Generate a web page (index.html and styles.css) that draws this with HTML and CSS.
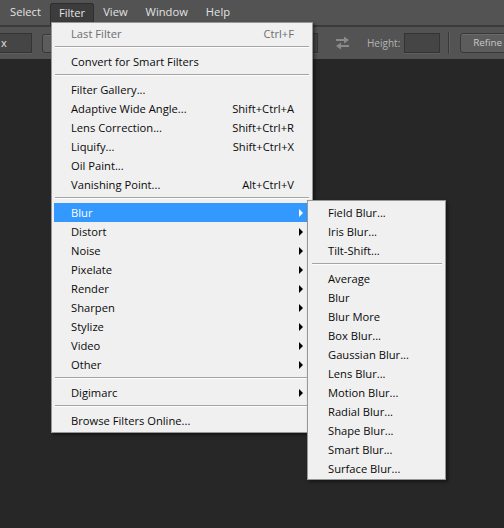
FILE: index.html
```html
<!DOCTYPE html>
<html>
<head>
<meta charset="utf-8">
<link rel="stylesheet" href="styles.css">
</head>
<body>
<div class="app">
  <div class="menubar">
    <span class="mb-item">Select</span>
    <span class="mb-item active">Filter</span>
    <span class="mb-item">View</span>
    <span class="mb-item">Window</span>
    <span class="mb-item">Help</span>
  </div>
  <div class="optbar">
    <div class="field field-unit">x</div>
    <div class="btn btn-small"></div>
    <div class="field field-mid"></div>
    <svg class="swap" width="15" height="14" viewBox="0 0 15 14">
      <polygon points="1,3 9,3 9,0.5 14,4 9,7.5 9,5 1,5" fill="#8a8a8a"/>
      <polygon points="14,9 6,9 6,6.5 1,10 6,13.5 6,11 14,11" fill="#8a8a8a"/>
    </svg>
    <span class="opt-label">Height:</span>
    <div class="field field-h"></div>
    <div class="divider"></div>
    <div class="btn btn-refine">Refine</div>
  </div>
  <div class="workspace"></div>

  <div class="menu">
    <div class="item disabled"><span class="label">Last Filter</span><span class="shortcut">Ctrl+F</span></div>
    <div class="sep"></div>
    <div class="item"><span class="label">Convert for Smart Filters</span></div>
    <div class="sep"></div>
    <div class="item"><span class="label">Filter Gallery...</span></div>
    <div class="item"><span class="label">Adaptive Wide Angle...</span><span class="shortcut">Shift+Ctrl+A</span></div>
    <div class="item"><span class="label">Lens Correction...</span><span class="shortcut">Shift+Ctrl+R</span></div>
    <div class="item"><span class="label">Liquify...</span><span class="shortcut">Shift+Ctrl+X</span></div>
    <div class="item"><span class="label">Oil Paint...</span></div>
    <div class="item"><span class="label">Vanishing Point...</span><span class="shortcut">Alt+Ctrl+V</span></div>
    <div class="sep"></div>
    <div class="item sub selected"><span class="label">Blur</span><span class="arrow"></span></div>
    <div class="item sub"><span class="label">Distort</span><span class="arrow"></span></div>
    <div class="item sub"><span class="label">Noise</span><span class="arrow"></span></div>
    <div class="item sub"><span class="label">Pixelate</span><span class="arrow"></span></div>
    <div class="item sub"><span class="label">Render</span><span class="arrow"></span></div>
    <div class="item sub"><span class="label">Sharpen</span><span class="arrow"></span></div>
    <div class="item sub"><span class="label">Stylize</span><span class="arrow"></span></div>
    <div class="item sub"><span class="label">Video</span><span class="arrow"></span></div>
    <div class="item sub"><span class="label">Other</span><span class="arrow"></span></div>
    <div class="sep"></div>
    <div class="item sub"><span class="label">Digimarc</span><span class="arrow"></span></div>
    <div class="sep"></div>
    <div class="item"><span class="label">Browse Filters Online...</span></div>
  </div>

  <div class="submenu">
    <div class="item"><span class="label">Field Blur...</span></div>
    <div class="item"><span class="label">Iris Blur...</span></div>
    <div class="item"><span class="label">Tilt-Shift...</span></div>
    <div class="sep"></div>
    <div class="item"><span class="label">Average</span></div>
    <div class="item"><span class="label">Blur</span></div>
    <div class="item"><span class="label">Blur More</span></div>
    <div class="item"><span class="label">Box Blur...</span></div>
    <div class="item"><span class="label">Gaussian Blur...</span></div>
    <div class="item"><span class="label">Lens Blur...</span></div>
    <div class="item"><span class="label">Motion Blur...</span></div>
    <div class="item"><span class="label">Radial Blur...</span></div>
    <div class="item"><span class="label">Shape Blur...</span></div>
    <div class="item"><span class="label">Smart Blur...</span></div>
    <div class="item"><span class="label">Surface Blur...</span></div>
  </div>
</div>
</body>
</html>
```

FILE: styles.css
```css
* { box-sizing: border-box; }
html, body { margin: 0; padding: 0; background: #272727; }
body { font-family: "Open Sans", "Segoe UI", sans-serif; }

.app {
  position: relative;
  width: 504px;
  height: 528px;
  overflow: hidden;
  background: #272727;
}

/* Menu bar */
.menubar {
  display: flex;
  align-items: flex-start;
  height: 27px;
  padding-left: 1px;
  background: #535353;
  border-bottom: 2px solid #3a3a3a;
}
.mb-item {
  padding: 0 9px;
  height: 25px;
  line-height: 24px;
  font-size: 11.2px;
  color: #e2e2e2;
}
.mb-item.active {
  margin-top: 3px;
  height: 22px;
  line-height: 18px;
  padding: 0 8px;
  background: #3c3c3c;
  border: 1px solid #2e2e2e;
  border-bottom: none;
  border-radius: 3px 3px 0 0;
}

/* Options bar */
.optbar {
  display: flex;
  align-items: center;
  height: 32px;
  background: #535353;
}
.field {
  flex: none;
  height: 20px;
  background: #454545;
  border: 1px solid #343434;
  box-shadow: 0 1px 0 #5e5e5e;
}
.field-unit {
  width: 32px;
  border-left: none;
  font-size: 11px;
  line-height: 17px;
  color: #e0e0e0;
  padding-left: 1px;
}
.btn {
  flex: none;
  height: 19px;
  background: #5c5c5c;
  border: 1px solid #383838;
  border-radius: 3px;
  box-shadow: inset 0 1px 0 #6a6a6a;
}
.btn-small { width: 40px; margin-left: 10px; }
.field-mid { width: 60px; margin-left: 176px; }
.swap { flex: none; margin-left: 17px; }
.opt-label {
  flex: none;
  margin-left: 17px;
  font-size: 10px;
  color: #b4b4b4;
}
.field-h { width: 36px; margin-left: 4px; }
.divider {
  flex: none;
  width: 2px;
  height: 22px;
  margin-left: 8px;
  border-left: 1px solid #3a3a3a;
  border-right: 1px solid #5f5f5f;
}
.btn-refine {
  margin-left: 10px;
  width: 60px;
  height: 20px;
  padding-left: 12px;
  font-size: 9.8px;
  line-height: 17px;
  white-space: nowrap;
  color: #c9c9c9;
}

.workspace { height: 469px; background: #272727; }

/* Dropdown menu */
.menu, .submenu {
  position: absolute;
  background: #f0f0f0;
  border: 1px solid #979797;
  box-shadow: 2px 2px 3px rgba(0, 0, 0, 0.45);
  font-size: 11.2px;
  color: #0a0a0a;
}
.menu {
  left: 51px;
  top: 22px;
  width: 262px;
  padding: 1px 5px 2px 2px;
}
.submenu {
  left: 307px;
  top: 200px;
  width: 139px;
  padding: 2px 1px 1px 1px;
}
.item {
  display: flex;
  align-items: center;
  height: 19px;
  padding: 0 4px 0 17px;
  white-space: nowrap;
}
.submenu .item { padding-left: 19px; }
.item .label { flex: 1; }
.item .shortcut { margin-right: 9px; }
.item.disabled { color: #6d6d6d; }
.item.selected { background: #3399ff; color: #fff; }
.arrow {
  width: 0;
  height: 0;
  border-left: 4px solid #000;
  border-top: 4px solid transparent;
  border-bottom: 4px solid transparent;
}
.item.selected .arrow { border-left-color: #fff; }
.sep {
  height: 2px;
  margin: 3px -2px 4px 1px;
  border-top: 1px solid #a4a4a4;
  border-bottom: 1px solid #fdfdfd;
}
.submenu .sep { margin: 3px 2px 4px 3px; }
```
